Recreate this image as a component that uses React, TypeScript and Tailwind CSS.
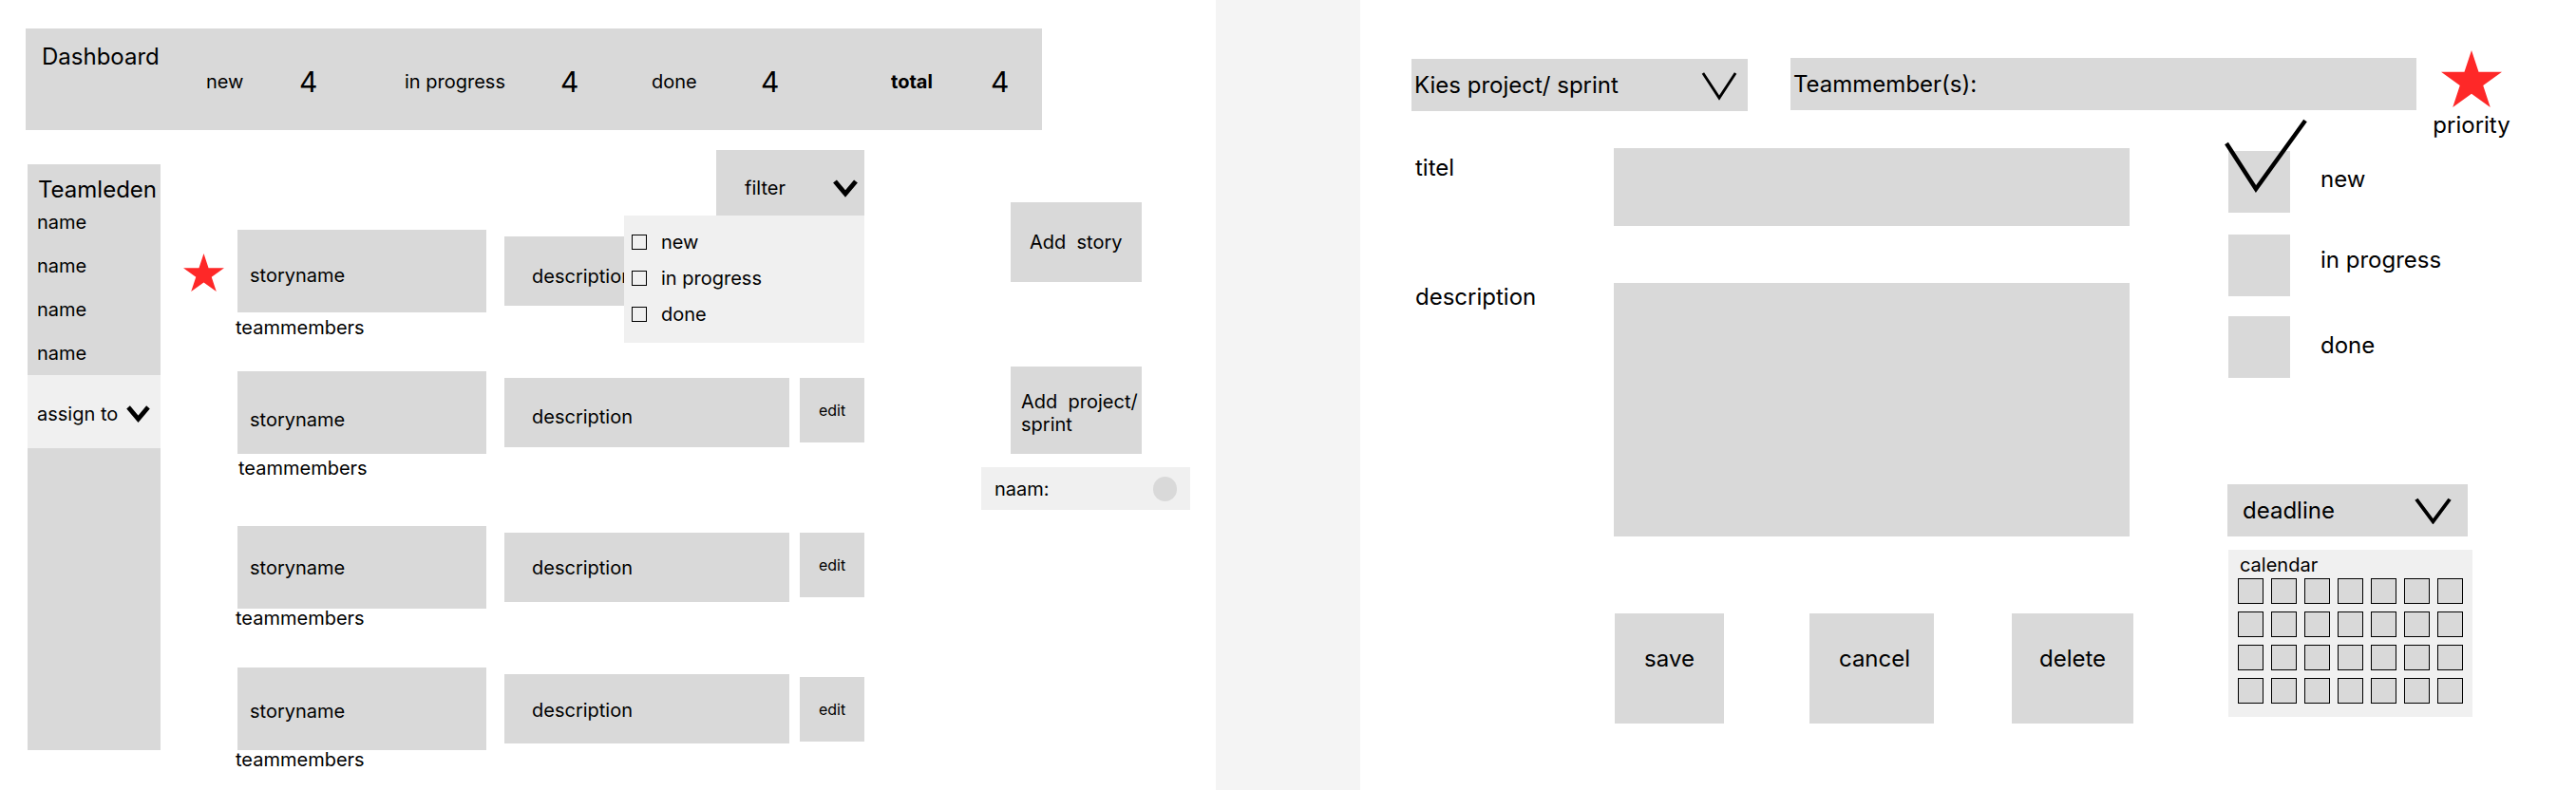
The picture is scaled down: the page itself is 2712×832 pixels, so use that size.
import React from "react";

const STAR_PTS =
  "50,0 61.2,34.5 97.6,34.5 68.2,55.9 79.4,90.5 50,69.1 20.6,90.5 31.8,55.9 2.4,34.5 38.8,34.5";

function Star({ className }: { className: string }) {
  return (
    <svg viewBox="2.4 0 95.2 90.5" preserveAspectRatio="none" className={className}>
      <polygon points={STAR_PTS} fill="#fe2828" />
    </svg>
  );
}

function BoldChevron({ className }: { className: string }) {
  return (
    <svg viewBox="0 0 28 20" className={className}>
      <polyline points="3,3 14,16 25,3" fill="none" stroke="#000" strokeWidth="5" strokeLinejoin="miter" />
    </svg>
  );
}

function ThinChevron({ className, sw }: { className: string; sw: number }) {
  return (
    <svg viewBox="0 0 40 32" preserveAspectRatio="none" className={className}>
      <polyline points="2,3 20,29 38,3" fill="none" stroke="#000" strokeWidth={sw} strokeLinejoin="miter" />
    </svg>
  );
}

const rows = [
  { star: true, h: "h-[149px]", name: "pt-[9px]", tm: "mt-[4px] -ml-[2px]", desc: "pt-[11px]", edit: "mt-[7px]" },
  { star: false, h: "h-[163px]", name: "pt-[15px]", tm: "mt-[3px] ml-[1px]", desc: "pt-[9px]", edit: "mt-[7px]" },
  { star: false, h: "h-[149px]", name: "pt-[1px]", tm: "-mt-[2px] -ml-[2px]", desc: "pt-0", edit: "mt-[7px]" },
  { star: false, h: "h-[100px]", name: "pt-[5px]", tm: "-mt-[2px] -ml-[2px]", desc: "pt-[3px]", edit: "mt-[10px]" },
];

function Dashboard() {
  return (
    <div className="flex items-start w-[1070px] h-[107px] bg-[#d9d9d9]">
      <div className="w-[190px] pl-[17px] mt-[15px] text-[24px] leading-[29px]">Dashboard</div>
      <div className="flex items-center mt-[38px] h-[36px] text-[20px] leading-[24px]">
        <span className="w-[98px]">new</span>
        <span className="w-[111px] text-[30px] leading-[36px]">4</span>
        <span className="w-[164px]">in progress</span>
        <span className="w-[96px] text-[30px] leading-[36px]">4</span>
        <span className="w-[115px]">done</span>
        <span className="w-[137px] text-[30px] leading-[36px]">4</span>
        <span className="w-[105px] font-bold">total</span>
        <span className="text-[30px] leading-[36px]">4</span>
      </div>
    </div>
  );
}

function Teamleden() {
  return (
    <div className="ml-[2px] mt-[15px] w-[140px] h-[617px] bg-[#d9d9d9] flex flex-col">
      <div className="h-[38px] pt-[16px] pl-[11px] text-[24px] leading-[21px]">Teamleden</div>
      {["name", "name", "name", "name"].map((n, i) => (
        <div key={i} className="h-[46px] pl-[10px] text-[20px] leading-[46px]">
          {n}
        </div>
      ))}
      <div className="h-[77px] bg-[#f0f0f0] flex items-center pt-[4px] pl-[10px] text-[20px] leading-[24px]">
        <span>assign to</span>
        <BoldChevron className="ml-[8px] w-[27px] h-[19px]" />
      </div>
    </div>
  );
}

function Stories() {
  return (
    <div className="ml-[24px] w-[717px] flex flex-col text-[20px] leading-[24px]">
      <div className="flex justify-end h-[69px]">
        <div className="relative w-[156px] h-[69px] bg-[#d9d9d9] flex items-center justify-between pt-[10px] pl-[30px] pr-[6px]">
          <span>filter</span>
          <BoldChevron className="w-[28px] h-[20px]" />
          <div className="absolute top-full right-0 z-20 w-[253px] h-[134px] bg-[#f0f0f0] pt-[9px] pl-[8px]">
            {["new", "in progress", "done"].map((t) => (
              <div key={t} className="h-[38px] flex items-center">
                <span className="w-[16px] h-[16px] border border-black" />
                <span className="ml-[15px]">{t}</span>
              </div>
            ))}
          </div>
        </div>
      </div>
      <div className="mt-[15px] flex flex-col">
        {rows.map((r, i) => (
          <div key={i} className={`flex items-start ${r.h}`}>
            <div className="w-[57px] pt-[25px]">
              {r.star ? <Star className="w-[43px] h-[40px]" /> : null}
            </div>
            <div className="flex flex-col">
              <div className={`w-[262px] h-[87px] bg-[#d9d9d9] flex items-center pl-[13px] ${r.name}`}>storyname</div>
              <div className={r.tm}>teammembers</div>
            </div>
            <div className={`ml-[19px] mt-[7px] w-[300px] h-[73px] bg-[#d9d9d9] flex items-center pl-[29px] ${r.desc}`}>
              description
            </div>
            <div className={`ml-[11px] w-[68px] h-[68px] bg-[#d9d9d9] flex items-center justify-center text-[16px] ${r.edit}`}>
              edit
            </div>
          </div>
        ))}
      </div>
    </div>
  );
}

function Actions() {
  return (
    <div className="ml-[123px] w-[220px] flex flex-col text-[20px] leading-[24px]">
      <div className="ml-[31px] mt-[55px] w-[138px] h-[84px] bg-[#d9d9d9] flex items-center pl-[20px] whitespace-pre">
        {"Add  story"}
      </div>
      <div className="ml-[31px] mt-[89px] w-[138px] h-[92px] bg-[#d9d9d9] flex flex-col justify-center pt-[6px] pl-[11px] whitespace-pre">
        <span>{"Add  project/"}</span>
        <span>sprint</span>
      </div>
      <div className="mt-[14px] w-[220px] h-[45px] bg-[#f0f0f0] flex items-center justify-between pl-[14px] pr-[14px]">
        <span>naam:</span>
        <span className="w-[25px] h-[26px] rounded-full bg-[#d9d9d9]" />
      </div>
    </div>
  );
}

function LeftPanel() {
  return (
    <div className="w-[1280px] shrink-0 h-full pl-[27px] pt-[30px]">
      <Dashboard />
      <div className="flex items-start mt-[21px]">
        <Teamleden />
        <Stories />
        <Actions />
      </div>
    </div>
  );
}

function RightPanel() {
  return (
    <div className="w-[1280px] shrink-0 h-full pl-[54px] pt-[61px] text-[24px] leading-[29px]">
      <div className="flex items-start">
        <div className="mt-[1px] w-[354px] h-[55px] bg-[#d9d9d9] flex items-center justify-between pl-[3px] pr-[11px]">
          <span>Kies project/ sprint</span>
          <ThinChevron className="w-[38px] h-[32px]" sw={3} />
        </div>
        <div className="ml-[45px] w-[659px] h-[55px] bg-[#d9d9d9] flex items-center pl-[3px]">Teammember(s):</div>
        <div className="ml-[19px] -mt-[8px] w-[78px] flex flex-col items-center">
          <Star className="w-[64px] h-[60px]" />
          <span className="mt-[4px]">priority</span>
        </div>
      </div>
      <div className="flex items-start">
        <div className="w-[760px] flex flex-col">
          <div className="mt-[10px] flex items-start">
            <div className="w-[213px] pl-[4px] mt-[6px]">titel</div>
            <div className="w-[543px] h-[82px] bg-[#d9d9d9]" />
          </div>
          <div className="mt-[60px] flex items-start">
            <div className="w-[213px] pl-[4px]">description</div>
            <div className="w-[543px] h-[267px] bg-[#d9d9d9]" />
          </div>
          <div className="mt-[81px] ml-[214px] flex items-start">
            <div className="w-[115px] h-[116px] bg-[#d9d9d9] flex justify-center pt-[33px]">save</div>
            <div className="ml-[90px] w-[131px] h-[116px] bg-[#d9d9d9] flex justify-center pt-[33px] pl-[6px]">cancel</div>
            <div className="ml-[82px] w-[128px] h-[116px] bg-[#d9d9d9] flex justify-center pt-[33px]">delete</div>
          </div>
        </div>
        <div className="ml-[99px] flex flex-col">
          <div className="mt-[13px] flex items-start">
            <div className="relative ml-[1px] w-[65px] h-[65px] bg-[#d9d9d9]">
              <svg viewBox="0 0 92 82" className="absolute -left-[6px] -top-[36px] w-[92px] h-[82px]">
                <polyline points="4,28 35,76 87,4" fill="none" stroke="#000" strokeWidth="4.5" strokeLinejoin="miter" />
              </svg>
            </div>
            <span className="ml-[32px] mt-[15px]">new</span>
          </div>
          <div className="mt-[23px] flex items-start">
            <div className="ml-[1px] w-[65px] h-[65px] bg-[#d9d9d9]" />
            <span className="ml-[32px] mt-[12px]">in progress</span>
          </div>
          <div className="mt-[21px] flex items-start">
            <div className="ml-[1px] w-[65px] h-[65px] bg-[#d9d9d9]" />
            <span className="ml-[32px] mt-[16px]">done</span>
          </div>
          <div className="mt-[112px] w-[253px] h-[55px] bg-[#d9d9d9] flex items-center justify-between pl-[16px] pr-[17px]">
            <span>deadline</span>
            <ThinChevron className="w-[39px] h-[29px]" sw={4} />
          </div>
          <div className="mt-[14px] ml-[1px] w-[257px] h-[176px] bg-[#f0f0f0] pt-[6px] pl-[10px]">
            <div className="pl-[2px] text-[20px] leading-[20px]">calendar</div>
            <div className="mt-[4px] grid grid-cols-7 gap-[8px] w-[237px]">
              {Array.from({ length: 28 }).map((_, i) => (
                <div key={i} className="w-[27px] h-[27px] bg-[#d9d9d9] border border-black" />
              ))}
            </div>
          </div>
        </div>
      </div>
    </div>
  );
}

export default function App() {
  return (
    <div className="flex w-[2712px] h-[832px] bg-white text-black font-[Inter,sans-serif] overflow-hidden">
      <LeftPanel />
      <div className="w-[152px] shrink-0 h-full bg-[#f4f4f4]" />
      <RightPanel />
    </div>
  );
}
